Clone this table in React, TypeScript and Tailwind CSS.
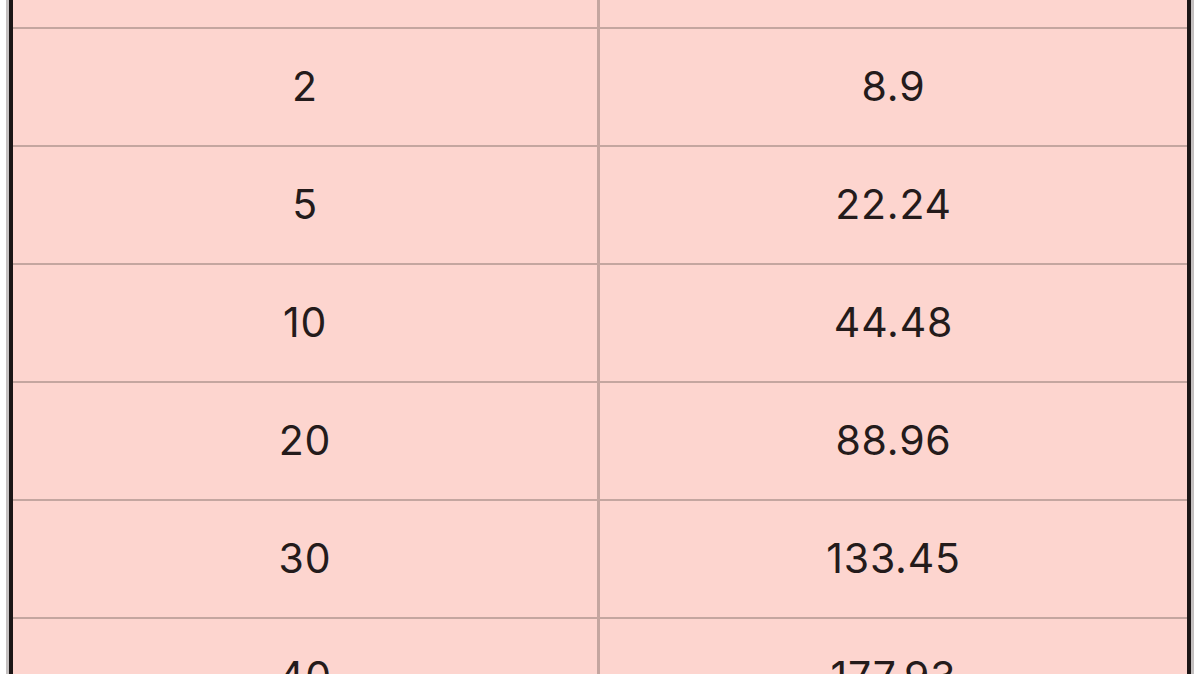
const rows = [
  ["2", "8.9"],
  ["5", "22.24"],
  ["10", "44.48"],
  ["20", "88.96"],
  ["30", "133.45"],
  ["40", "177.93"],
];

const App = () => {
  return (
    <div className="h-[674px] w-[1200px] overflow-hidden bg-white">
      <div className="ml-[6px] h-full w-[1188px] border-x-[3px] border-[#c4c0c0]">
        <div className="h-full border-x-[4px] border-[#1c1616] bg-[#fdd5cf] font-['Inter',sans-serif] text-[41px] tracking-[0.8px] text-[#241b1b]">
          <div className="grid h-[29px] grid-cols-2 border-b-2 border-[#c4a6a0]">
            <div className="border-r-[3px] border-[#c4a6a0]" />
            <div />
          </div>
          {rows.map(([a, b]) => (
            <div
              key={a}
              className="grid h-[118px] grid-cols-2 border-b-2 border-[#c4a6a0]"
            >
              <div className="flex items-center justify-center border-r-[3px] border-[#c4a6a0]">
                {a}
              </div>
              <div className="flex items-center justify-center">{b}</div>
            </div>
          ))}
        </div>
      </div>
    </div>
  );
};

export default App;
